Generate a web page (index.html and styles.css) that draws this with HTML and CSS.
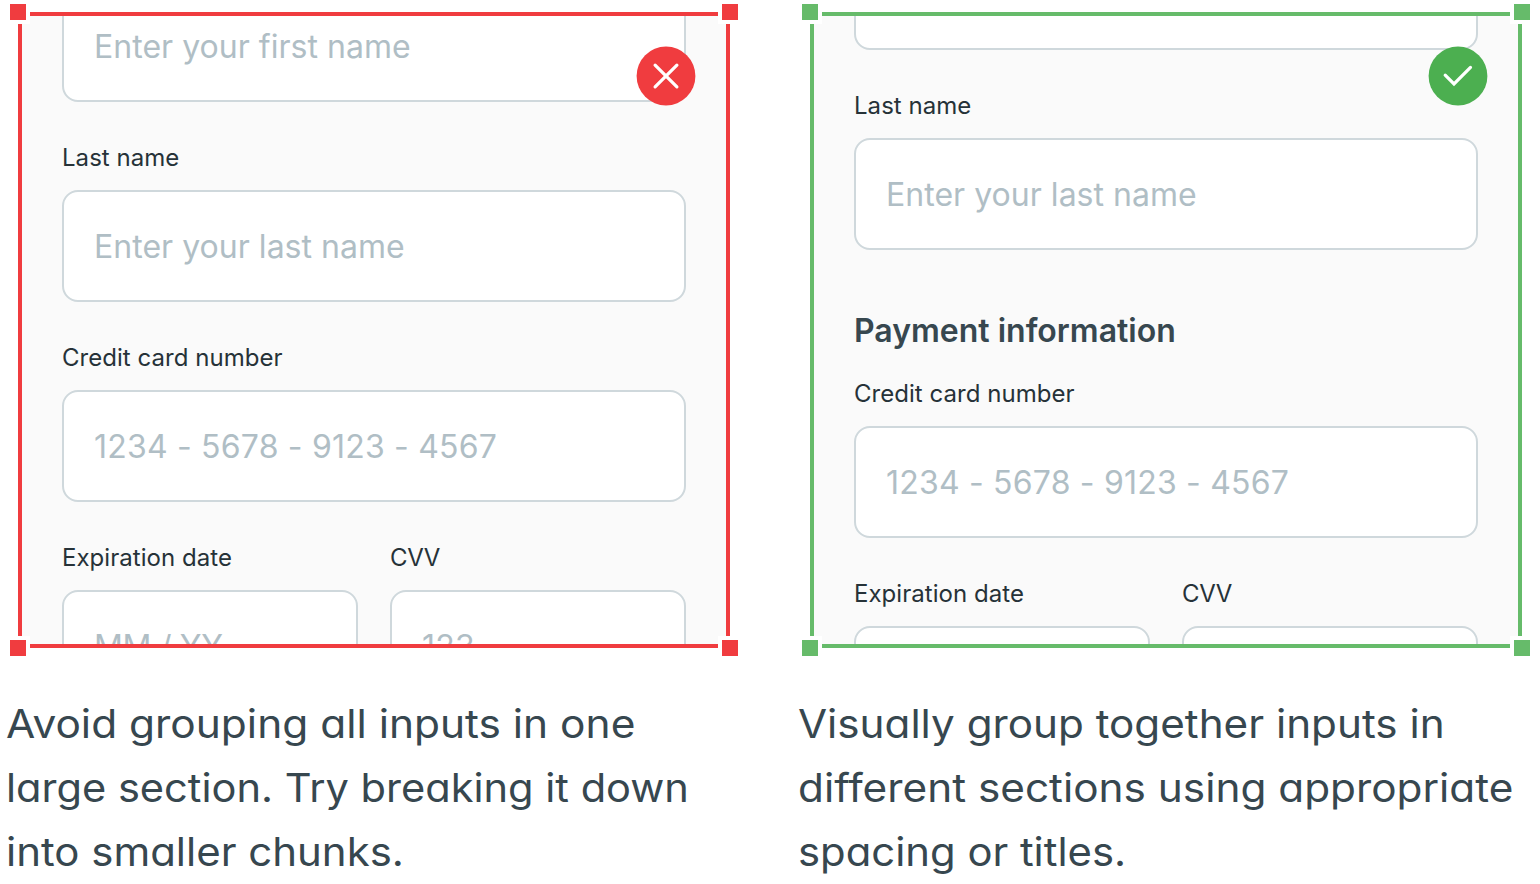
FILE: index.html
```html
<!DOCTYPE html>
<html lang="en">
<head>
<meta charset="utf-8">
<title>Grouping inputs</title>
<link rel="stylesheet" href="styles.css">
</head>
<body>
<main class="examples">
  <section class="example avoid">
    <div class="frame">
      <div class="form form-avoid">
        <div class="field"><span class="placeholder">Enter your first name</span></div>
        <div class="label">Last name</div>
        <div class="field"><span class="placeholder">Enter your last name</span></div>
        <div class="label">Credit card number</div>
        <div class="field"><span class="placeholder digits">1234 - 5678 - 9123 - 4567</span></div>
        <div class="row">
          <div><div class="label">Expiration date</div><div class="field"><span class="placeholder expiry">MM / YY</span></div></div>
          <div><div class="label cvv">CVV</div><div class="field"><span class="placeholder digits">123</span></div></div>
        </div>
      </div>
      <i class="handle tl"></i><i class="handle tr"></i><i class="handle bl"></i><i class="handle br"></i>
      <svg class="badge" viewBox="0 0 60 60"><circle cx="30" cy="30" r="29.4"/><path d="M19.1 19.1 40.9 40.9M40.9 19.1 19.1 40.9"/></svg>
    </div>
    <p class="caption"><span class="l1">Avoid grouping all inputs in one</span><span class="l2">large section. Try breaking it down</span><span class="l3">into smaller chunks.</span></p>
  </section>
  <section class="example prefer">
    <div class="frame">
      <div class="form form-prefer">
        <div class="field"></div>
        <div class="label">Last name</div>
        <div class="field"><span class="placeholder">Enter your last name</span></div>
        <h2 class="title">Payment information</h2>
        <div class="label titled">Credit card number</div>
        <div class="field"><span class="placeholder digits">1234 - 5678 - 9123 - 4567</span></div>
        <div class="row">
          <div><div class="label">Expiration date</div><div class="field"></div></div>
          <div><div class="label cvv">CVV</div><div class="field"></div></div>
        </div>
      </div>
      <i class="handle tl"></i><i class="handle tr"></i><i class="handle bl"></i><i class="handle br"></i>
      <svg class="badge" viewBox="0 0 60 60"><circle cx="30" cy="30" r="29.4"/><path d="M17.2 29.2 26 38 42.5 21.4"/></svg>
    </div>
    <p class="caption"><span class="l4">Visually group together inputs in</span><span class="l5">different sections using appropriate</span><span class="l6">spacing or titles.</span></p>
  </section>
</main>
</body>
</html>
```
FILE: styles.css
```css
* { box-sizing: border-box; }
body { margin: 0; background: #fff; font-family: Inter, "Liberation Sans", sans-serif; overflow: hidden; }
.examples { display: flex; gap: 80px; padding: 12px 0 0 18px; height: 884px; }
.example { width: 712px; flex: none; }
.avoid { --line: #f03c3f; --badge: #f03c3f; }
.prefer { --line: #66bb6a; --badge: #4caf50; }
.frame { position: relative; height: 636px; border: 4px solid var(--line); background: #fafafa; }
.form { height: 628px; overflow: hidden; padding: 0 40px; }
.form > .field:first-child { margin-top: -26px; }
.form-prefer > .field:first-child { margin-top: -78px; }
.field { height: 112px; border: 2px solid #cfd8dc; border-radius: 16px; background: #fff; padding: 2px 30px 0; display: flex; align-items: center; }
.placeholder { color: #b0bec5; font-size: 32px; line-height: 48px; white-space: nowrap; letter-spacing: 0.03px; }
.digits { letter-spacing: 0.2px; }
.expiry { letter-spacing: -0.3px; }
.label { margin: 40px 0 16px; height: 32px; font-size: 24px; line-height: 32px; color: #263238; white-space: nowrap; letter-spacing: 0.04px; }
.cvv { letter-spacing: -0.4px; }
.title { margin: 56px 0 0; height: 48px; padding-top: 1px; font-size: 32px; line-height: 48px; font-weight: 600; color: #37474f; white-space: nowrap; }
.label.titled { margin-top: 24px; }
.row { display: grid; grid-template-columns: 1fr 1fr; gap: 32px; }
.handle { position: absolute; width: 24px; height: 24px; border: 4px solid #fff; background: var(--line); }
.tl { left: -16px; top: -16px; }
.tr { right: -16px; top: -16px; }
.bl { left: -16px; bottom: -16px; }
.br { right: -16px; bottom: -16px; }
.badge { position: absolute; right: 30px; top: 30px; width: 60px; height: 60px; }
.badge circle { fill: var(--badge); }
.badge path { fill: none; stroke: #fff; stroke-width: 3.2; stroke-linecap: round; stroke-linejoin: miter; }
.caption { margin: 44px 0 0 -12px; color: #37474f; font-size: 39px; line-height: 64px; font-feature-settings: "cv11", "ss03"; }
.caption span { display: block; width: max-content; white-space: nowrap; transform-origin: 0 50%; }
.l1 { transform: scaleX(1.088); }
.l2 { transform: scaleX(1.066); }
.l3 { transform: scaleX(1.076); }
.l4 { transform: scaleX(1.082); }
.l5 { transform: scaleX(1.085); }
.l6 { transform: scaleX(1.072); }
```
